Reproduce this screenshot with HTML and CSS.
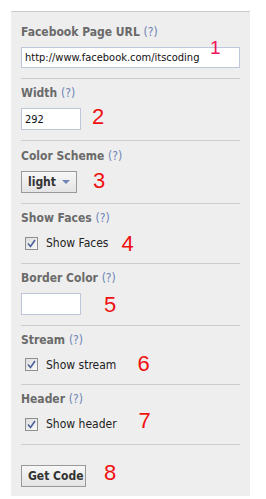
FILE: index.html
```html
<!DOCTYPE html>
<html lang="en">
<head>
  <meta charset="UTF-8">
  <title>Like Box settings</title>
  <link rel="stylesheet" href="styles.css">
</head>
<body>
  <div class="panel">
    <div class="field field-first">
      <label class="lbl">Facebook Page URL <span class="help">(?)</span></label>
      <div class="row row-url">
        <input class="txt txt-wide" type="text" value="http://www.facebook.com/itscoding">
        <span class="num num-1">1</span>
      </div>
    </div>

    <div class="field">
      <label class="lbl">Width <span class="help">(?)</span></label>
      <div class="row">
        <input class="txt txt-small" type="text" value="292">
        <span class="num num-2">2</span>
      </div>
    </div>

    <div class="field field-scheme">
      <label class="lbl">Color Scheme <span class="help">(?)</span></label>
      <div class="row">
        <button class="btn drop">light <span class="arrow"></span></button>
        <span class="num num-3">3</span>
      </div>
    </div>

    <div class="field">
      <label class="lbl">Show Faces <span class="help">(?)</span></label>
      <div class="row row-check">
        <span class="check"><svg width="9" height="9" viewBox="0 0 9 9"><path d="M1 4.5 L3.5 7.5 L8 1" fill="none" stroke="#4b5f9c" stroke-width="1.6"/></svg></span>
        <span class="check-text">Show Faces</span>
        <span class="num num-4">4</span>
      </div>
    </div>

    <div class="field">
      <label class="lbl">Border Color <span class="help">(?)</span></label>
      <div class="row">
        <input class="txt txt-small" type="text" value="">
        <span class="num num-5">5</span>
      </div>
    </div>

    <div class="field field-stream">
      <label class="lbl">Stream <span class="help">(?)</span></label>
      <div class="row row-check">
        <span class="check"><svg width="9" height="9" viewBox="0 0 9 9"><path d="M1 4.5 L3.5 7.5 L8 1" fill="none" stroke="#4b5f9c" stroke-width="1.6"/></svg></span>
        <span class="check-text">Show stream</span>
        <span class="num num-6">6</span>
      </div>
    </div>

    <div class="field">
      <label class="lbl">Header <span class="help">(?)</span></label>
      <div class="row row-check">
        <span class="check"><svg width="9" height="9" viewBox="0 0 9 9"><path d="M1 4.5 L3.5 7.5 L8 1" fill="none" stroke="#4b5f9c" stroke-width="1.6"/></svg></span>
        <span class="check-text">Show header</span>
        <span class="num num-7">7</span>
      </div>
    </div>

    <div class="field field-last">
      <div class="row">
        <button class="btn getcode">Get Code</button>
        <span class="num num-8">8</span>
      </div>
    </div>
  </div>
</body>
</html>
```

FILE: styles.css
```css
body {
  margin: 0;
  background: #fff;
  font-family: "DejaVu Sans Condensed", "DejaVu Sans", sans-serif;
  font-size: 11px;
  color: #333;
}
.panel {
  margin: 11px 0 0 11px;
  width: 219px;
  padding: 13px 10px 9px 10px;
  background: #eeeeee;
  border-top: 1px solid #cccccc;
}
.field {
  padding: 7px 0 10px 0;
  border-bottom: 1px solid #cccccc;
}
.field-first { padding-top: 0; }
.field-scheme { padding-top: 8px; }
.field-last {
  border-bottom: none;
  padding: 12px 0 0 0;
}
.lbl {
  display: block;
  height: 14px;
  line-height: 14px;
  font-weight: bold;
  font-size: 12px;
  color: #6a6a6a;
}
.help {
  font-weight: normal;
  font-size: 12px;
  color: #6d84b4;
}
.row {
  display: flex;
  align-items: center;
  height: 22px;
  margin-top: 8px;
}
.row-url {
  position: relative;
  height: 21px;
}
.txt {
  box-sizing: border-box;
  height: 22px;
  margin: 0;
  padding: 0 3px;
  border: 1px solid #bdc7d8;
  background: #fff;
  font-family: inherit;
  font-size: 11px;
  color: #111;
  outline: none;
}
.txt-wide { width: 219px; height: 21px; }
.txt-small { width: 60px; }
.btn {
  box-sizing: border-box;
  height: 22px;
  margin: 0;
  border: 1px solid #999;
  background: linear-gradient(#f7f7f7, #e4e4e4);
  font-family: inherit;
  font-size: 12px;
  font-weight: bold;
  color: #333;
  display: flex;
  align-items: center;
}
.drop {
  width: 56px;
  padding: 0 0 0 6px;
}
.arrow {
  display: inline-block;
  margin-left: 6px;
  width: 0;
  height: 0;
  border-left: 4px solid transparent;
  border-right: 4px solid transparent;
  border-top: 4px solid #6d84b4;
}
.getcode {
  width: 65px;
  padding: 0 0 0 6px;
}
.row-check {
  height: 20px;
  padding-left: 4px;
}
.field-stream .row-check { height: 19px; }
.check {
  box-sizing: border-box;
  width: 13px;
  height: 13px;
  border: 1px solid #8e8f8f;
  background: linear-gradient(135deg, #dcdcdc, #fbfbfb);
  display: flex;
  align-items: center;
  justify-content: center;
}
.check-text {
  margin-left: 8px;
  font-size: 12px;
  color: #222;
}
.num {
  font-family: "Liberation Sans", Arial, sans-serif;
  font-size: 22px;
  line-height: 22px;
  color: #f01010;
}
.num-1 {
  position: absolute;
  left: 189px;
  top: -10px;
  font-size: 19px;
  color: #f0145a;
}
.num-2 { margin-left: 11px; margin-top: -5px; }
.num-3 { margin-left: 16px; margin-top: -2px; }
.num-4 { margin-left: 13px; margin-top: 2px; }
.num-5 { margin-left: 23px; margin-top: 2px; }
.num-6 { margin-left: 21px; margin-top: -2px; }
.num-7 { margin-left: 22px; margin-top: -6px; }
.num-8 { margin-left: 18px; margin-top: -6px; }
```
